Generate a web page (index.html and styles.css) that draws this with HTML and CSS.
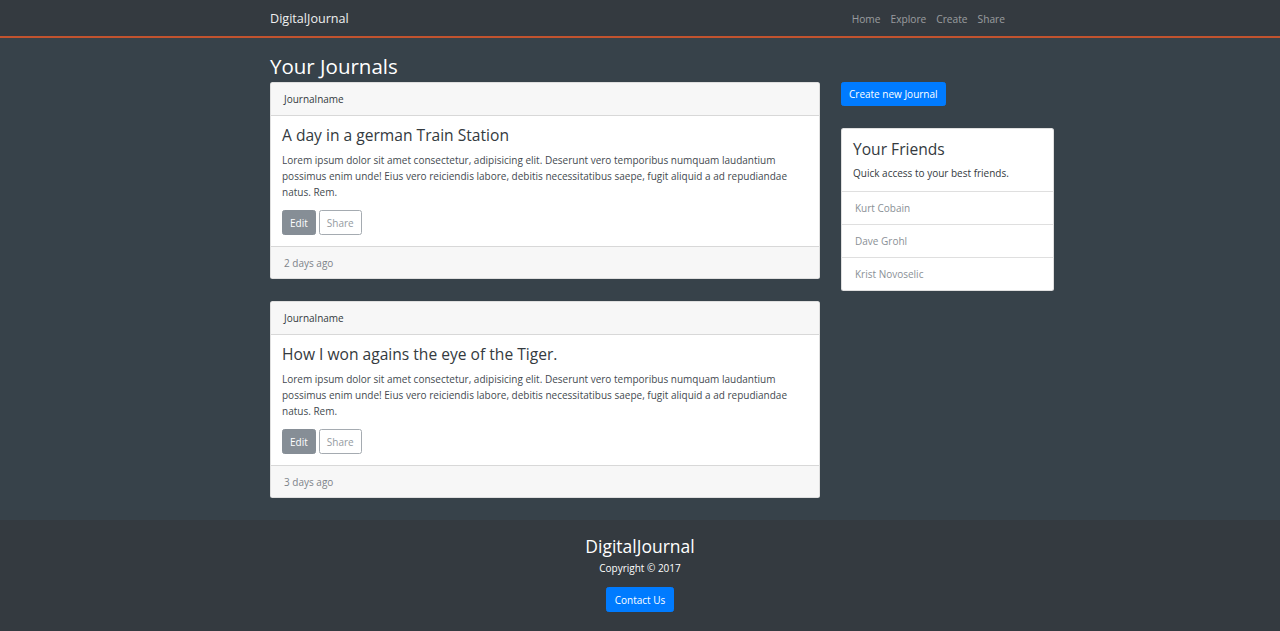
FILE: index.html
```html
<!DOCTYPE html>
<html lang="en">
<head>
<meta charset="utf-8">
<title>DigitalJournal</title>
<link rel="stylesheet" href="styles.css">
</head>
<body>
<header class="navbar">
  <div class="nav-inner">
    <a class="brand" href="#">DigitalJournal</a>
    <ul class="nav-links">
      <li><a href="#">Home</a></li>
      <li><a href="#">Explore</a></li>
      <li><a href="#">Create</a></li>
      <li><a href="#">Share</a></li>
    </ul>
  </div>
</header>
<main class="main">
  <div class="content">
    <section class="journals">
      <h2 class="page-title">Your Journals</h2>
      <article class="card">
        <div class="card-header">Journalname</div>
        <div class="card-body">
          <h4 class="card-title">A day in a german Train Station</h4>
          <p class="card-text">Lorem ipsum dolor sit amet consectetur, adipisicing elit. Deserunt vero temporibus numquam laudantium possimus enim unde! Eius vero reiciendis labore, debitis necessitatibus saepe, fugit aliquid a ad repudiandae natus. Rem.</p>
          <div class="btns">
            <button class="btn btn-edit">Edit</button>
            <button class="btn btn-share">Share</button>
          </div>
        </div>
        <div class="card-footer">2 days ago</div>
      </article>
      <article class="card">
        <div class="card-header">Journalname</div>
        <div class="card-body">
          <h4 class="card-title">How I won agains the eye of the Tiger.</h4>
          <p class="card-text">Lorem ipsum dolor sit amet consectetur, adipisicing elit. Deserunt vero temporibus numquam laudantium possimus enim unde! Eius vero reiciendis labore, debitis necessitatibus saepe, fugit aliquid a ad repudiandae natus. Rem.</p>
          <div class="btns">
            <button class="btn btn-edit">Edit</button>
            <button class="btn btn-share">Share</button>
          </div>
        </div>
        <div class="card-footer">3 days ago</div>
      </article>
    </section>
    <aside class="sidebar">
      <button class="btn btn-primary">Create new Journal</button>
      <div class="friends">
        <div class="friends-body">
          <h4 class="friends-title">Your Friends</h4>
          <p class="friends-text">Quick access to your best friends.</p>
        </div>
        <ul class="friend-list">
          <li>Kurt Cobain</li>
          <li>Dave Grohl</li>
          <li>Krist Novoselic</li>
        </ul>
      </div>
    </aside>
  </div>
</main>
<footer class="footer">
  <h3 class="footer-title">DigitalJournal</h3>
  <p class="copyright">Copyright © 2017</p>
  <button class="btn btn-primary btn-contact">Contact Us</button>
</footer>
</body>
</html>
```

FILE: styles.css
```css
* { box-sizing: border-box; }
html, body { margin: 0; padding: 0; }
body {
  font-family: "Open Sans", "Noto Sans", sans-serif;
  font-size: 10px;
  line-height: 16px;
  color: #212529;
  background: #37424a;
  height: 631px;
  display: flex;
  flex-direction: column;
}
a { text-decoration: none; }

.navbar {
  background: #343a40;
  border-bottom: 2px solid #c2532f;
  height: 38px;
}
.nav-inner {
  width: 740px;
  margin-left: 270px;
  height: 36px;
  padding-top: 2px;
  display: flex;
  align-items: center;
  justify-content: space-between;
}
.brand {
  color: #fff;
  font-size: 12.6px;
  opacity: 0.92;
}
.nav-links {
  list-style: none;
  margin: 0;
  padding: 0;
  display: flex;
}
.nav-links a {
  display: block;
  padding: 0 5px;
  color: rgba(255,255,255,0.5);
  font-size: 10.2px;
}

.main { flex: 1; }
.content {
  display: flex;
  margin-left: 270px;
  gap: 21px;
  align-items: flex-start;
}
.journals { width: 550px; }
.page-title {
  color: #fff;
  font-weight: 400;
  font-size: 20.5px;
  line-height: 24px;
  margin: 0;
  padding-top: 16px;
  padding-bottom: 4px;
}
.card {
  background: #fff;
  border: 1px solid rgba(0,0,0,0.125);
  border-radius: 2.5px;
  margin-bottom: 22px;
  overflow: hidden;
}
.card-header {
  background: #f7f7f7;
  border-bottom: 1px solid rgba(0,0,0,0.125);
  height: 33px;
  padding: 0 13px;
  display: flex;
  align-items: center;
  color: #343a40;
}
.card-body { padding: 9px 11px 11px; }
.card-title {
  margin: 0 0 7px;
  font-weight: 400;
  font-size: 15.6px;
  line-height: 20px;
  color: #343a40;
}
.card-text {
  margin: 0 0 10px;
  color: #444a50;
}
.btns { display: flex; gap: 3px; }
.btn {
  font-family: inherit;
  font-size: 10px;
  line-height: 16px;
  border-radius: 2.5px;
  cursor: pointer;
}
.btn-edit {
  background: #868e96;
  border: 1px solid #868e96;
  color: #fff;
  height: 25px;
  padding: 0 7px;
}
.btn-share {
  background: #fff;
  border: 1px solid #a5abb1;
  color: #949a9f;
  height: 25px;
  padding: 0 7px;
}
.card-footer {
  background: #f7f7f7;
  border-top: 1px solid rgba(0,0,0,0.125);
  height: 32px;
  padding: 0 13px;
  display: flex;
  align-items: center;
  color: #7d8389;
}

.sidebar {
  width: 213px;
  padding-top: 44px;
  display: flex;
  flex-direction: column;
  align-items: flex-start;
}
.btn-primary {
  background: #007bff;
  border: 1px solid #007bff;
  color: #fff;
  height: 24px;
  padding: 0 7px;
}
.friends {
  margin-top: 22px;
  width: 213px;
  background: #fff;
  border: 1px solid rgba(0,0,0,0.125);
  border-radius: 2.5px;
}
.friends-body { padding: 10px 11px 10px; }
.friends-title {
  margin: 0 0 5px;
  font-weight: 400;
  font-size: 15.6px;
  line-height: 20px;
  color: #343a40;
}
.friends-text { margin: 0; color: #343a40; padding-top: 1px; }
.friend-list {
  list-style: none;
  margin: 0;
  padding: 0;
}
.friend-list li {
  border-top: 1px solid rgba(0,0,0,0.125);
  height: 33px;
  padding: 0 13px;
  display: flex;
  align-items: center;
  color: #8a9096;
}

.footer {
  background: #343a40;
  height: 112px;
  display: flex;
  flex-direction: column;
  align-items: center;
  padding-top: 15px;
}
.footer-title {
  margin: 0;
  color: #fff;
  font-weight: 400;
  font-size: 17.5px;
  line-height: 22px;
}
.copyright {
  margin: 3px 0 11px;
  color: #fff;
  font-size: 10px;
}
.btn-contact { height: 25px; padding: 0 8px; }
```
